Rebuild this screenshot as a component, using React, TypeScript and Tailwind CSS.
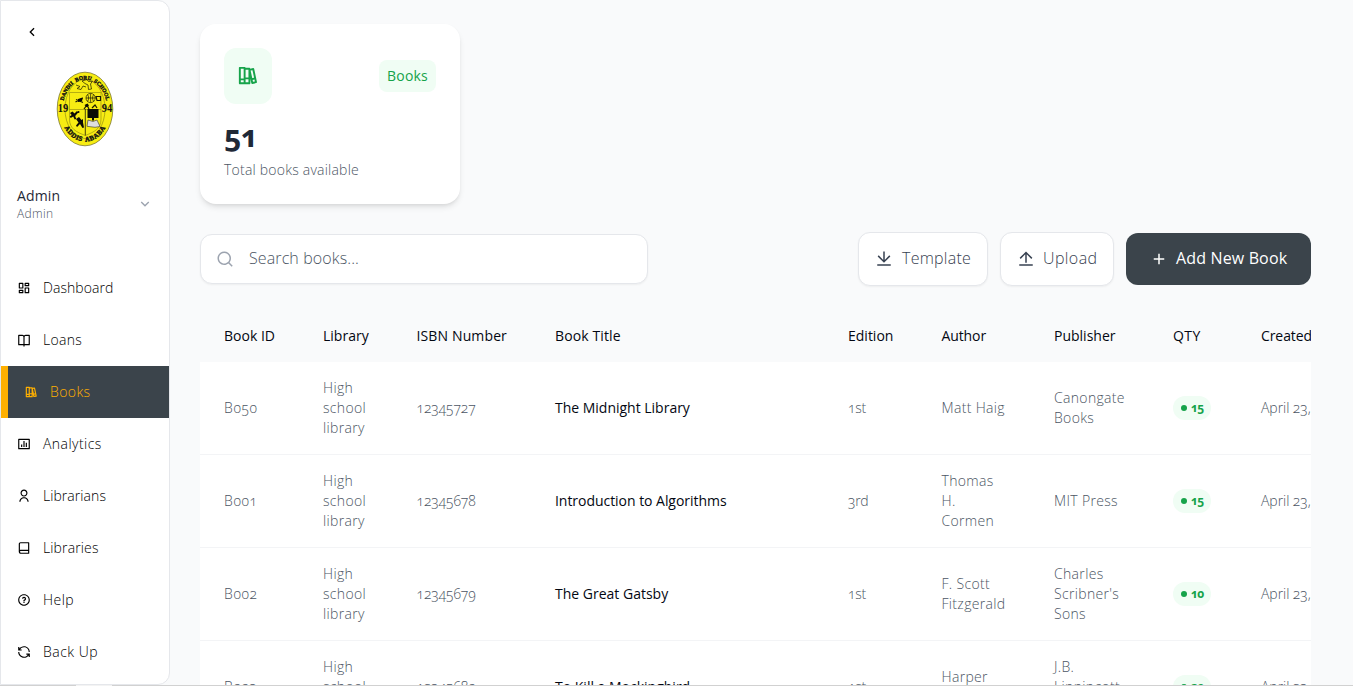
import type { ReactNode } from "react";
import {
  RiAddLine,
  RiArrowDownSLine,
  RiArrowLeftSLine,
  RiBarChartBoxLine,
  RiBookLine,
  RiBookOpenLine,
  RiBookShelfLine,
  RiDashboardLine,
  RiDownloadLine,
  RiLoopLeftLine,
  RiQuestionLine,
  RiSearchLine,
  RiUploadLine,
  RiUserLine,
} from "react-icons/ri";

const navItems = [
  { label: "Dashboard", Icon: RiDashboardLine, tracking: "tracking-[0.07px]" },
  { label: "Loans", Icon: RiBookOpenLine, tracking: "tracking-[0.28px]" },
  { label: "Books", Icon: RiBookShelfLine, tracking: "tracking-[0.4px]", active: true },
  { label: "Analytics", Icon: RiBarChartBoxLine, tracking: "tracking-[0.45px]" },
  { label: "Librarians", Icon: RiUserLine, tracking: "tracking-[0.06px]" },
  { label: "Libraries", Icon: RiBookLine, tracking: "tracking-[0.13px]" },
  { label: "Help", Icon: RiQuestionLine, tracking: "tracking-[0.44px]" },
  { label: "Back Up", Icon: RiLoopLeftLine, tracking: "tracking-[0.48px]" },
];

function SchoolLogo() {
  return (
    <svg width="58" height="76" viewBox="0 0 58 76" className="block [font-feature-settings:normal]">
      <defs>
        <path id="ringTop" d="M7 33 A22.5 31 0 0 1 51 33" />
        <path id="ringBottom" d="M7 54 A26 35.5 0 0 0 51 54" />
      </defs>
      <ellipse cx="29" cy="38" rx="27.8" ry="36.8" fill="#f7ec13" stroke="#6b6720" strokeWidth="0.7" />
      <ellipse cx="29" cy="38" rx="20" ry="29.5" fill="none" stroke="#6f6a10" strokeWidth="0.5" />
      <g fill="#111" fontFamily="Liberation Serif, serif" fontWeight="700">
        <g stroke="#111" strokeWidth="0.4">
          <text fontSize="5.4" wordSpacing="1.5">
            <textPath href="#ringTop" startOffset="50%" textAnchor="middle">
              DANDII BORU SCHOOL
            </textPath>
          </text>
          <text fontSize="6.8" letterSpacing="0.4" wordSpacing="1.5">
            <textPath href="#ringBottom" startOffset="50%" textAnchor="middle">
              ADDIS ABABA
            </textPath>
          </text>
        </g>
        <text x="1.8" y="41" fontSize="12" textLength="10.5" lengthAdjust="spacingAndGlyphs">19</text>
        <text x="45.7" y="41" fontSize="12" textLength="10.5" lengthAdjust="spacingAndGlyphs">94</text>
      </g>
      <g fill="none" stroke="#8a8410" strokeWidth="0.6">
        <path d="M13.5 21.5H45V48C45 58 38 61 29.3 64.5C20.5 61 13.5 58 13.5 48Z" />
        <path d="M13.5 38.5H45" />
        <path d="M29.3 38V64.5" stroke="#33300a" strokeWidth="0.9" />
      </g>
      <g stroke="#1a1905" strokeWidth="0.7" fill="none">
        <path d="M20 14l4 1.500-3 2 4 1 2-3.500 3 1M26 10l5-1.500 1.500 2 4-.5-2 3 1 5-3 .5-.5-4.500-3-1.500z" />
        <circle cx="34.6" cy="27" r="4.6" />
        <path d="M30 27h9.500M34.600 22.500v9M31.500 23.500c1.500 2 1.500 5 0 7M37.700 23.500c-1.500 2-1.500 5 0 7" />
        <path d="M40 25.500h4.500v4H41zM19.500 31l7-4M20 28.500l7 3M28 38l3-4 2 4M36 37l3-3 2 3" strokeWidth="1.2" />
      </g>
      <g fill="#0b0b05">
        <path d="M22 28l5-1.500-1 3.500-4 1zM28.500 34l3-1.500 1.500 2-2.500 1.500z" />
        <rect x="31.5" y="38" width="11" height="9" />
        <path d="M14 42l2.500-1.500 2 2 2.500-2.500 1.200 1.500-3 3.500 1 3-1.500.5-1.500-3-2.500 1.500-1-1.500 2-1.500z" />
        <path d="M20 48l3-2 2.500 3 1.500-1v3.500l1 5-1.500.5-2.500-4-3 3-1-1.500 2.500-3z" />
        <circle cx="22.5" cy="41" r="1" />
        <path d="M36 47h2v2.500h-2z" />
      </g>
      <path d="M32 49l5 1.500 4-1.500 3 6.500-5 .8-8-1z" fill="#dedede" stroke="#333" strokeWidth="0.6" />
    </svg>
  );
}

function Sidebar() {
  return (
    <aside className="flex h-[685px] w-[170px] shrink-0 flex-col rounded-r-xl border border-[#e5e7eb] bg-white">
      <div className="flex h-[70px] items-start pl-[23px] pt-[23px]">
        <RiArrowLeftSLine size={16} className="text-black" />
      </div>
      <div className="flex h-[77px] justify-center">
        <SchoolLogo />
      </div>
      <div className="mt-[37px] flex h-[38px] items-center justify-between pl-4 pr-4">
        <div>
          <div className="text-[14px] font-medium leading-5 tracking-[0.15px] text-[#1f2937]">Admin</div>
          <div className="text-[12px] font-light leading-4 tracking-[0.35px] text-[#4b5563]">Admin</div>
        </div>
        <RiArrowDownSLine size={16} className="text-[#9ca3af]" />
      </div>
      <nav className="mt-[39px] flex flex-col">
        {navItems.map(({ label, Icon, tracking, active }) => (
          <div
            key={label}
            className={
              active
                ? "flex h-[52px] items-center gap-3 border-l-[7px] border-[#ffb000] bg-[#3b444b] pl-4 text-[#ffb000]"
                : "flex h-[52px] items-center gap-3 pl-4 text-black"
            }
          >
            <Icon size={14} className="shrink-0" />
            <span className={`text-[14px] font-light leading-5 ${tracking}`}>{label}</span>
          </div>
        ))}
      </nav>
    </aside>
  );
}

function StatCard() {
  return (
    <div className="h-[180px] w-[260px] rounded-2xl bg-white p-6 shadow-[0_4px_6px_-1px_rgba(0,0,0,0.1),0_2px_4px_-2px_rgba(0,0,0,0.1)]">
      <div className="flex items-center justify-between">
        <div className="flex h-14 w-12 items-center justify-center rounded-xl bg-[#f0fdf4] pb-px pr-px">
          <RiBookShelfLine size={23} className="text-[#16a34a]" />
        </div>
        <div className="flex h-8 w-[57px] items-center justify-center rounded-lg bg-[#f0fdf4] pb-0.5 text-[14px] tracking-[0.2px] text-[#16a34a]">
          Books
        </div>
      </div>
      <div className="mt-[14px] h-9 text-[30px] font-bold leading-9 tracking-[-0.4px] text-[#1f2937]">51</div>
      <div className="mt-1.5 text-[14px] font-light leading-5 tracking-[0.22px] text-[#4b5563]">
        Total books available
      </div>
    </div>
  );
}

function Toolbar() {
  return (
    <div className="mt-7 flex h-[54px] items-center justify-between">
      <div className="flex h-[50px] w-[448px] items-center gap-[15px] rounded-xl border border-[#e5e7eb] bg-white pl-[15px] shadow-[0_1px_2px_rgba(0,0,0,0.05)]">
        <RiSearchLine size={18} className="text-[#9ca3af]" />
        <span className="pb-0.5 text-[16px] font-light leading-6 tracking-[0.11px] text-[#4b5563]">Search books...</span>
      </div>
      <div className="flex items-center gap-3 text-[16px] leading-6">
        <div className="flex h-[54px] w-[130px] items-center gap-[9px] rounded-xl border border-[#e5e7eb] bg-white pl-4 font-light text-[#374151] shadow-[0_1px_2px_rgba(0,0,0,0.05)]">
          <RiDownloadLine size={18} />
          <span className="pb-0.5 tracking-[0.25px]">Template</span>
        </div>
        <div className="flex h-[54px] w-[114px] items-center gap-2 rounded-xl border border-[#e5e7eb] bg-white pl-4 font-light text-[#374151] shadow-[0_1px_2px_rgba(0,0,0,0.05)]">
          <RiUploadLine size={18} />
          <span className="pb-0.5 tracking-[0.4px]">Upload</span>
        </div>
        <div className="flex h-[52px] w-[185px] items-center gap-2 rounded-xl bg-[#3b444b] pl-6 text-white">
          <RiAddLine size={18} />
          <span className="whitespace-nowrap pb-0.5 tracking-[0.15px]">Add New Book</span>
        </div>
      </div>
    </div>
  );
}

const columns = [
  { label: "Book ID", width: "w-[99px]", tracking: "tracking-[0px]" },
  { label: "Library", width: "w-[93.5px]", tracking: "tracking-[0px]" },
  { label: "ISBN Number", width: "w-[138.5px]", tracking: "tracking-[0.13px]" },
  { label: "Book Title", width: "w-[293px]", tracking: "tracking-[0.12px]" },
  { label: "Edition", width: "w-[93.5px]", tracking: "tracking-[0px]" },
  { label: "Author", width: "w-[112.5px]", tracking: "tracking-[-0.11px]" },
  { label: "Publisher", width: "w-[119px]", tracking: "tracking-[0px]" },
  { label: "QTY", width: "w-[88px]", tracking: "tracking-[0.4px]" },
  { label: "Created", width: "w-[174px]", tracking: "tracking-[-0.09px]" },
];

type Book = {
  id: string;
  isbn: string;
  title: string;
  titleTracking: string;
  edition: string;
  author: string[];
  publisher: string[];
  qty: number;
};

const books: Book[] = [
  { id: "B050", isbn: "12345727", title: "The Midnight Library", titleTracking: "tracking-[-0.01px]", edition: "1st", author: ["Matt Haig"], publisher: ["Canongate", "Books"], qty: 15 },
  { id: "B001", isbn: "12345678", title: "Introduction to Algorithms", titleTracking: "tracking-[-0.04px]", edition: "3rd", author: ["Thomas", "H.", "Cormen"], publisher: ["MIT Press"], qty: 15 },
  { id: "B002", isbn: "12345679", title: "The Great Gatsby", titleTracking: "tracking-[0px]", edition: "1st", author: ["F. Scott", "Fitzgerald"], publisher: ["Charles", "Scribner's", "Sons"], qty: 10 },
  { id: "B003", isbn: "12345680", title: "To Kill a Mockingbird", titleTracking: "tracking-[0px]", edition: "1st", author: ["Harper", "Lee"], publisher: ["J.B.", "Lippincott", "& Co."], qty: 20 },
];

function Lines({ items }: { items: string[] }) {
  return (
    <>
      {items.map((line) => (
        <div key={line} className="whitespace-nowrap">
          {line}
        </div>
      ))}
    </>
  );
}

function Cell({ children, className = "" }: { children: ReactNode; className?: string }) {
  return <td className={`h-[93px] whitespace-nowrap border-b border-[#f3f4f6] p-0 pl-6 align-middle ${className}`}>{children}</td>;
}

function BooksTable() {
  return (
    <div className="mt-6 w-[1111px] overflow-hidden">
      <table className="w-[1211px] table-fixed border-separate border-spacing-0 text-[14px] leading-5">
        <thead>
          <tr>
            {columns.map((c) => (
              <th key={c.label} className={`h-[52px] whitespace-nowrap p-0 pl-6 text-left font-normal text-[#030712] ${c.width} ${c.tracking}`}>
                {c.label}
              </th>
            ))}
          </tr>
        </thead>
        <tbody className="bg-white font-light text-[#4b5563]">
          {books.map((b) => (
            <tr key={b.id}>
              <Cell className="tracking-[0.6px]">{b.id}</Cell>
              <Cell className="tracking-[0.35px]">
                <Lines items={["High", "school", "library"]} />
              </Cell>
              <Cell className="tracking-[-0.12px]">{b.isbn}</Cell>
              <Cell className={`font-normal text-[#030712] ${b.titleTracking}`}>{b.title}</Cell>
              <Cell className="tracking-[-0.3px]">{b.edition}</Cell>
              <Cell className="tracking-[0.33px]">
                <Lines items={b.author} />
              </Cell>
              <Cell className="tracking-[0.33px]">
                <Lines items={b.publisher} />
              </Cell>
              <Cell>
                <span className="flex h-6 w-[38px] items-center gap-1 rounded-full bg-[#f0fdf4] pl-2 text-[12px] font-bold leading-4 tracking-[-0.6px] text-[#16a34a]">
                  <span className="h-1.5 w-1.5 rounded-full bg-[#16a34a]" />
                  {b.qty}
                </span>
              </Cell>
              <Cell className="tracking-[-0.05px]">April 23, 2025</Cell>
            </tr>
          ))}
        </tbody>
      </table>
    </div>
  );
}

export default function App() {
  return (
    <div className="flex h-[686px] w-[1353px] flex-col overflow-hidden bg-[#f9fafb] font-['Open_Sans',sans-serif] [font-feature-settings:'onum']">
      <div className="flex h-[685px] overflow-hidden">
        <Sidebar />
        <main className="flex-1 overflow-hidden pl-[30px] pr-[42px] pt-6">
          <StatCard />
          <Toolbar />
          <BooksTable />
        </main>
      </div>
      <div className="flex h-px bg-[#d1d1d1] pl-[76px]">
        <div className="h-px w-9 bg-[#f3f3f3]" />
      </div>
    </div>
  );
}
